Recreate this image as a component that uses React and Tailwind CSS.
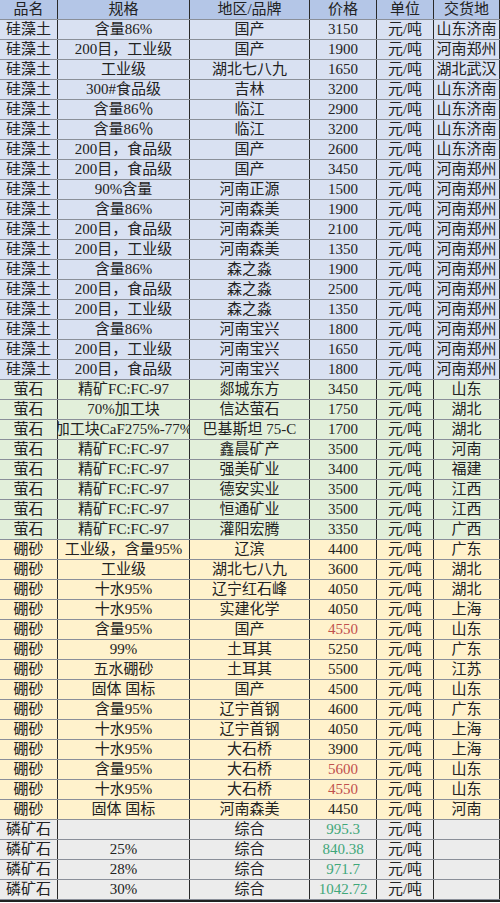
const RED = 'r';
const GREEN = 'g';

const groups = [
  {
    name: '硅藻土',
    bg: 'bg-[#d9e1f2]',
    rows: [
      ['含量86%', '国产', '3150', '山东济南'],
      ['200目，工业级', '国产', '1900', '河南郑州'],
      ['工业级', '湖北七八九', '1650', '湖北武汉'],
      ['300#食品级', '吉林', '3200', '山东济南'],
      ['含量86％', '临江', '2900', '山东济南'],
      ['含量86％', '临江', '3200', '山东济南'],
      ['200目，食品级', '国产', '2600', '山东济南'],
      ['200目，食品级', '国产', '3450', '河南郑州'],
      ['90%含量', '河南正源', '1500', '河南郑州'],
      ['含量86%', '河南森美', '1900', '河南郑州'],
      ['200目，食品级', '河南森美', '2100', '河南郑州'],
      ['200目，工业级', '河南森美', '1350', '河南郑州'],
      ['含量86%', '森之淼', '1900', '河南郑州'],
      ['200目，食品级', '森之淼', '2500', '河南郑州'],
      ['200目，工业级', '森之淼', '1350', '河南郑州'],
      ['含量86%', '河南宝兴', '1800', '河南郑州'],
      ['200目，工业级', '河南宝兴', '1650', '河南郑州'],
      ['200目，食品级', '河南宝兴', '1800', '河南郑州'],
    ],
  },
  {
    name: '萤石',
    bg: 'bg-[#e2efda]',
    rows: [
      ['精矿FC:FC-97', '郯城东方', '3450', '山东'],
      ['70%加工块', '信达萤石', '1750', '湖北'],
      ['加工块CaF275%-77%', '巴基斯坦 75-C', '1700', '湖北'],
      ['精矿FC:FC-97', '鑫晨矿产', '3500', '河南'],
      ['精矿FC:FC-97', '强美矿业', '3400', '福建'],
      ['精矿FC:FC-97', '德安实业', '3500', '江西'],
      ['精矿FC:FC-97', '恒通矿业', '3500', '江西'],
      ['精矿FC:FC-97', '灌阳宏腾', '3350', '广西'],
    ],
  },
  {
    name: '硼砂',
    bg: 'bg-[#fff2cc]',
    rows: [
      ['工业级，含量95%', '辽滨', '4400', '广东'],
      ['工业级', '湖北七八九', '3600', '湖北'],
      ['十水95%', '辽宁红石峰', '4050', '湖北'],
      ['十水95%', '实建化学', '4050', '上海'],
      ['含量95%', '国产', '4550', '山东', RED],
      ['99%', '土耳其', '5250', '广东'],
      ['五水硼砂', '土耳其', '5500', '江苏'],
      ['固体 国标', '国产', '4500', '山东'],
      ['含量95%', '辽宁首钢', '4600', '广东'],
      ['十水95%', '辽宁首钢', '4050', '上海'],
      ['十水95%', '大石桥', '3900', '上海'],
      ['含量95%', '大石桥', '5600', '山东', RED],
      ['十水95%', '大石桥', '4550', '山东', RED],
      ['固体 国标', '河南森美', '4450', '河南'],
    ],
  },
  {
    name: '磷矿石',
    bg: 'bg-[#ececec]',
    rows: [
      ['', '综合', '995.3', '', GREEN],
      ['25%', '综合', '840.38', '', GREEN],
      ['28%', '综合', '971.7', '', GREEN],
      ['30%', '综合', '1042.72', '', GREEN],
    ],
  },
];

const cols = 'grid grid-cols-[58px_132px_120px_67px_57px_66px]';
const cell =
  'flex items-center justify-center overflow-hidden whitespace-nowrap border-r border-[#2a2a2a] leading-none';

function Row({ bg, values, priceColor }) {
  const priceClass =
    priceColor === RED ? 'text-[#c0504d]' : priceColor === GREEN ? 'text-[#3fa77a]' : '';
  return (
    <div className={`${cols} h-[20px] border-b border-[#8a8f99] ${bg}`}>
      <div className={cell}>{values[0]}</div>
      <div className={cell}>{values[1]}</div>
      <div className={cell}>{values[2]}</div>
      <div className={`${cell} ${priceClass}`}>{values[3]}</div>
      <div className={cell}>{values[4]}</div>
      <div className={cell}>{values[5]}</div>
    </div>
  );
}

export default function App() {
  return (
    <div
      className="w-[500px] h-[903px] overflow-hidden bg-white text-[15px] text-[#222]"
      style={{ fontFamily: '"Liberation Serif", "Noto Sans CJK SC", serif' }}
    >
      <div className="border-b-2 border-[#222]">
        <Row bg="bg-[#b4c6e7]" values={['品名', '规格', '地区/品牌', '价格', '单位', '交货地']} />
        {groups.map((g) =>
          g.rows.map((r, i) => (
            <Row
              key={g.name + i}
              bg={g.bg}
              priceColor={r[4]}
              values={[g.name, r[0], r[1], r[2], '元/吨', r[3]]}
            />
          ))
        )}
      </div>
    </div>
  );
}
